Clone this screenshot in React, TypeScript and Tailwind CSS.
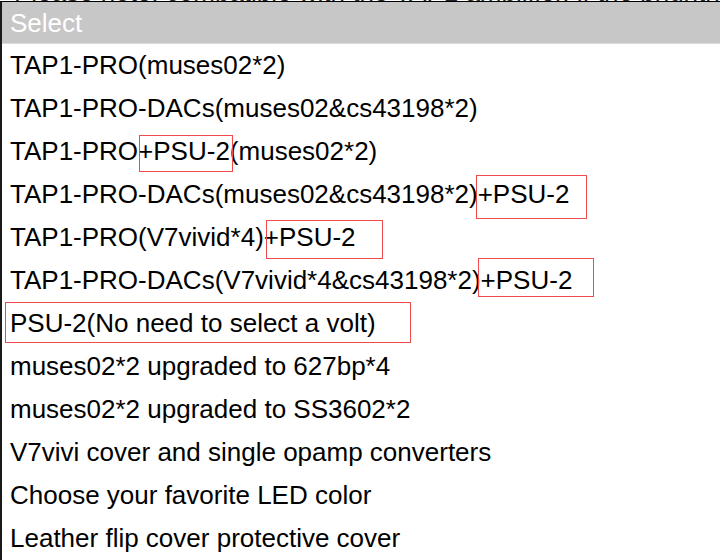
import React from "react";

type Box = { left: number; top: number; width: number; height: number };
type Row = { text: string; box?: Box };

const rows: Row[] = [
  { text: "TAP1-PRO(muses02*2)" },
  { text: "TAP1-PRO-DACs(muses02&cs43198*2)" },
  { text: "TAP1-PRO+PSU-2(muses02*2)", box: { left: 137, top: 5, width: 94, height: 37 } },
  { text: "TAP1-PRO-DACs(muses02&cs43198*2)+PSU-2", box: { left: 474, top: 2, width: 111, height: 44 } },
  { text: "TAP1-PRO(V7vivid*4)+PSU-2", box: { left: 264, top: 4, width: 117, height: 39 } },
  { text: "TAP1-PRO-DACs(V7vivid*4&cs43198*2)+PSU-2", box: { left: 476, top: -1, width: 116, height: 39 } },
  { text: "PSU-2(No need to select a volt)", box: { left: 3, top: 0, width: 406, height: 41 } },
  { text: "muses02*2 upgraded to 627bp*4" },
  { text: "muses02*2 upgraded to SS3602*2" },
  { text: "V7vivi cover and single opamp converters" },
  { text: "Choose your favorite LED color" },
  { text: "Leather flip cover protective cover" },
];

export default function App() {
  return (
    <div
      className="w-[720px] h-[560px] overflow-hidden bg-white text-black"
      style={{ fontFamily: '"Liberation Sans", Arial, sans-serif' }}
    >
      <div className="h-px overflow-hidden bg-white">
        <div className="-mt-[23px] pl-[14px] text-[26px] leading-[30px] whitespace-nowrap text-[#222]">
          Please note: compatible with the TAP1 amplifier, if the brightness is insufficient you may adjust
        </div>
      </div>
      <div className="border-t border-black border-l-2 border-l-[#1a1a1a]">
        <div className="h-[42px] bg-[#c7c7c7] border-b border-[#dadada] pl-2 text-[26px] leading-[42px] text-white">
          Select
        </div>
        {rows.map((r, i) => (
          <div
            key={i}
            className="relative h-[43px] pl-2 text-[26px] leading-[43px] whitespace-nowrap"
          >
            {r.text}
            {r.box && (
              <div
                className="absolute border border-[#f04a4a]"
                style={{
                  left: r.box.left,
                  top: r.box.top,
                  width: r.box.width,
                  height: r.box.height,
                }}
              />
            )}
          </div>
        ))}
      </div>
    </div>
  );
}
